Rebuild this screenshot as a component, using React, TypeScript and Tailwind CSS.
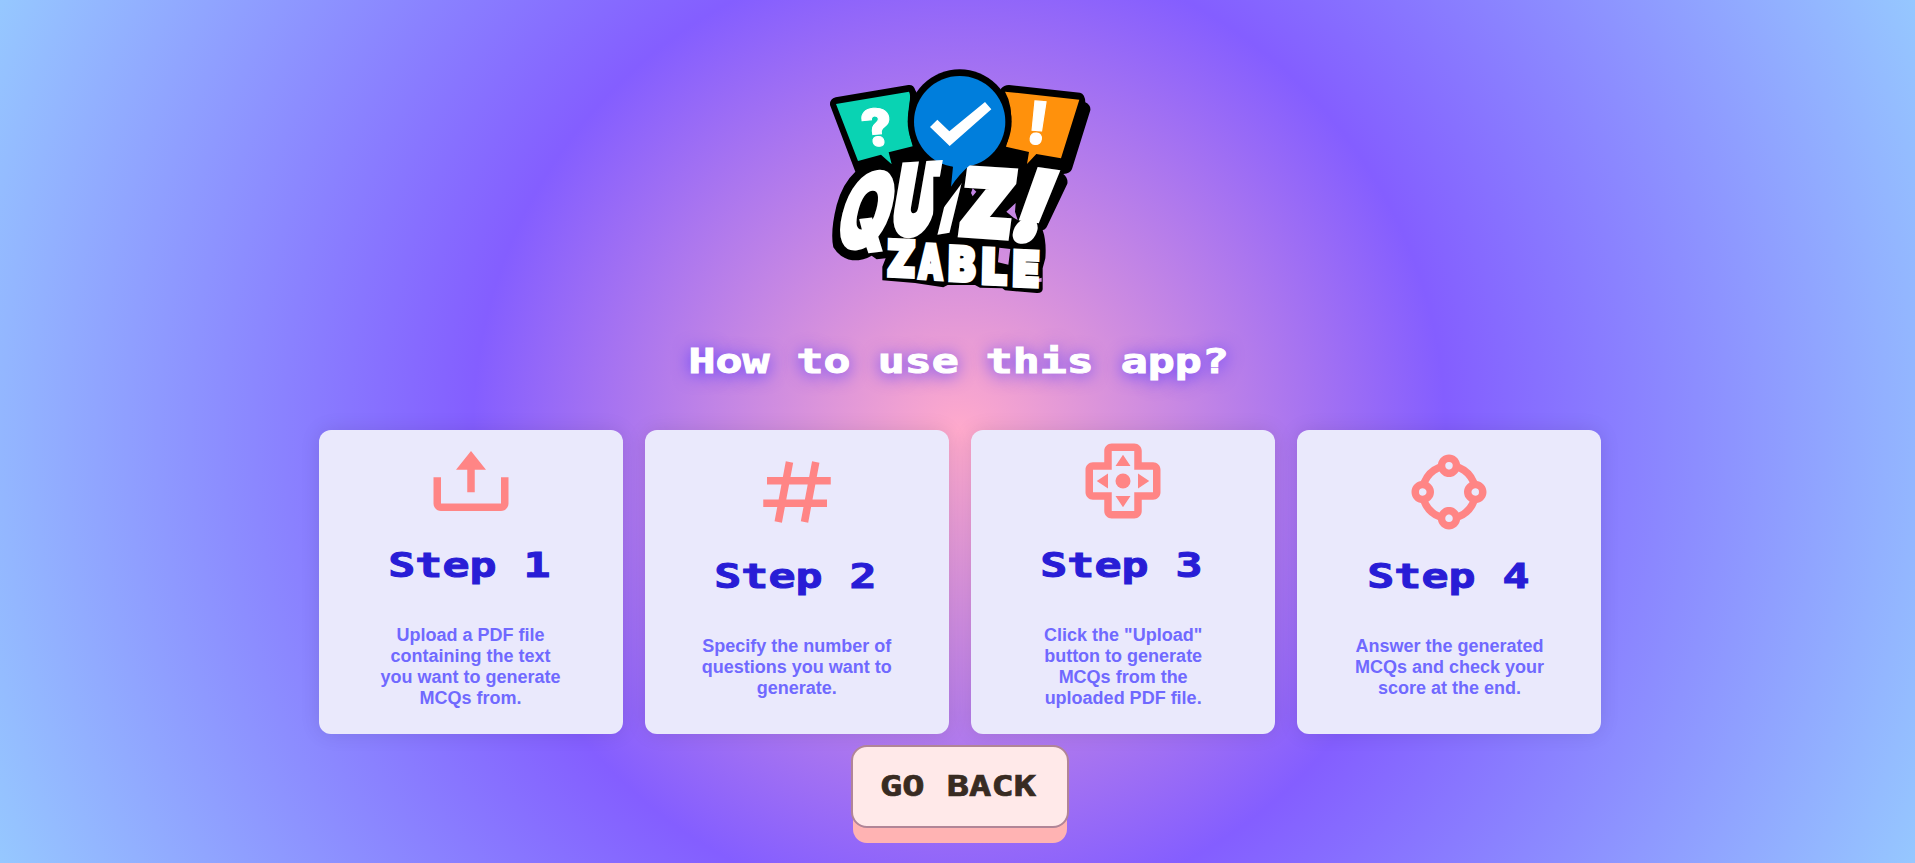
import type { ComponentType } from "react";
import { BiUpload, BiHash, BiJoystickButton, BiShapeCircle } from "react-icons/bi";

type Step = { title: string; text: string; Icon: ComponentType<{ className?: string }> };

const steps: Step[] = [
  { title: "Step 1", text: "Upload a PDF file containing the text you want to generate MCQs from.", Icon: BiUpload },
  { title: "Step 2", text: "Specify the number of questions you want to generate.", Icon: BiHash },
  { title: "Step 3", text: 'Click the "Upload" button to generate MCQs from the uploaded PDF file.', Icon: BiJoystickButton },
  { title: "Step 4", text: "Answer the generated MCQs and check your score at the end.", Icon: BiShapeCircle },
];

type LetterProps = { ch: string; m: string; bold?: number };

function Letter({ ch, m, bold = 8 }: LetterProps) {
  return (
    <text transform={`matrix(${m})`} fontSize="100" strokeWidth={bold} stroke="#fff" fill="#fff" strokeLinejoin="miter">
      {ch}
    </text>
  );
}

function Logo() {
  return (
    <svg viewBox="0 0 870 750" className="block h-[250px] w-[290px] font-['Inter',sans-serif] font-black" role="img" aria-label="Quiz!zable">
      <path
        fillRule="evenodd"
        d="M45 150Q44 131 62 127L280 90Q296 88 301 106L330 160H540L557 102Q567 90 582 90L795 113Q810 116 811 142Q828 150 826 166L771 342Q766 356 745 357Q760 370 757 386L697 512Q692 524 683 525Q695 560 691 610L683 640V703Q682 715 665 714L570 706L562 700L495 698L480 690L398 690L385 697L300 684L202 676V635L212 610L185 613L170 602Q145 617 112 616Q75 610 55 577Q45 530 65 450Q82 386 121 350ZM473 400L484 410L473 424L468 414ZM574 470L602 444L600 470L608 495L596 488ZM553 578L586 582L580 629L549 622ZM667 672L680 668V680L667 681Z"
      />
      <path fill="#09d3b3" d="M63 147L282 110Q288 120 283 145Q272 210 293 274L221 292L230 328L198 299L129 318Z" />
      <path fill="#ff910c" d="M570 110L793 134L738 310L664 297L636 327L642 291L573 275Q600 190 580 132Z" />
      <circle cx="434" cy="199" r="156" />
      <circle cx="434" cy="200" r="137" fill="#007edc" />
      <path fill="#fff" d="M345 216L367 194L403 229L510 141L529 163L404 273Z" />
      <Letter ch="?" m="1.55 -0.14 0.28 1.52 150 276" bold={2} />
      <Letter ch="!" m="1.6 0.12 -0.22 1.75 630 264" bold={2} />
      <Letter ch="Q" m="2.02 -0.25 -0.78 3.1 50 588" bold={3} />
      <Letter ch="U" m="1.66 -0.1 -0.48 2.76 226 537" bold={10} />
      <Letter ch="I" m="1.3 -0.2 -0.45 1.85 368 532" />
      <path d="M355 365H448L441 384L388 455L355 480Z" />
      <Letter ch="Z" m="2.2 0.15 -0.35 2.62 430 534" bold={10} />
      <Letter ch="!" m="2.35 0.35 -1.05 2.75 577 545" />
      <path fill="#007edc" d="M404 325L465 330Q430 360 408 395L414 335Z" />
      <Letter ch="Z" m="1.2 0.06 -0.03 1.45 216 661" bold={10} />
      <Letter ch="A" m="0.95 0.06 -0.03 1.42 308 669" />
      <Letter ch="B" m="1.22 0.06 -0.03 1.42 399 676" />
      <Letter ch="L" m="1.3 0.06 -0.03 1.42 500 684" bold={10} />
      <Letter ch="E" m="1.26 0.06 -0.03 1.42 593 691" bold={10} />
    </svg>
  );
}

function StepCard({ title, text, Icon }: Step) {
  return (
    <article className="flex size-[304px] flex-col items-center justify-center rounded-xl bg-[#eae9fc] text-center shadow-[0_0_20px_rgba(0,0,0,0.1)]">
      <Icon className="size-[90px] shrink-0 text-[#ff8585]" />
      <h2 className="mr-[3px] mb-[20px] scale-x-[1.32] font-['DejaVu_Sans_Mono',monospace] text-[34px] leading-[79px] font-bold whitespace-pre text-[#281dd6] [-webkit-text-stroke:1px_#281dd6]">
        {title}
      </h2>
      <p className="mb-[19px] w-[192px] font-['Liberation_Sans',sans-serif] text-[18px] leading-[21px] font-bold text-[#7069ff]">{text}</p>
    </article>
  );
}

export default function App() {
  return (
    <main className="flex h-[863px] flex-col items-center overflow-hidden bg-[radial-gradient(circle_at_959px_431px,#ffaacc_0%,#845eff_46.2%,#96c8ff_100%)] pl-[5px]">
      <div className="mt-[55px]">
        <Logo />
      </div>
      <h1 className="mt-[22px] mr-[3px] mb-[35px] scale-x-[1.32] font-['DejaVu_Sans_Mono',monospace] text-[34px] leading-[68px] font-bold whitespace-pre text-white [-webkit-text-stroke:1px_#fff] [text-shadow:0_2px_16px_#4a30ff]">
        How to use this app?
      </h1>
      <section className="flex gap-[22.3px]">
        {steps.map((s) => (
          <StepCard key={s.title} {...s} />
        ))}
      </section>
      <button className="mt-[11px] h-[83px] w-[218px] shrink-0 rounded-[16px] border-2 border-[#b18597] bg-[#ffe9e9] text-[#382b22] shadow-[0_17px_0_-2px_#ffb3b3]">
        <span className="mr-[4px] inline-block scale-x-[1.32] font-['DejaVu_Sans_Mono',monospace] text-[28px] font-bold whitespace-pre [-webkit-text-stroke:0.7px_#382b22]">GO BACK</span>
      </button>
    </main>
  );
}
